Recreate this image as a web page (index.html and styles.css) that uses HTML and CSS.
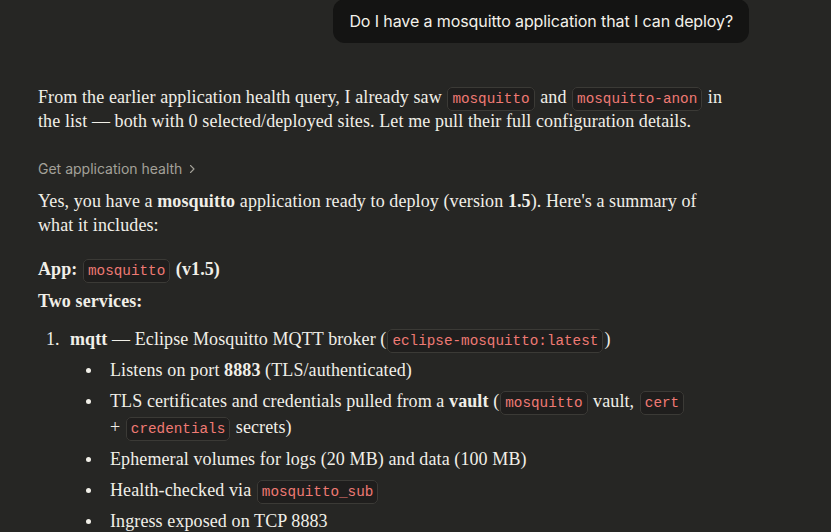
FILE: index.html
```html
<!DOCTYPE html>
<html>
<head>
<meta charset="utf-8">
<link rel="stylesheet" href="styles.css">
</head>
<body>
<div class="thread">
  <div class="user-row">
    <div class="bubble">Do I have a mosquitto application that I can deploy?</div>
  </div>
  <div class="reply">
    <p>From the earlier application health query, I already saw <code>mosquitto</code> and <code>mosquitto-anon</code> in the list — both with 0 selected/deployed sites. Let me pull their full configuration details.</p>
    <div class="tool">Get application health <svg class="chev" width="8" height="10" viewBox="0 0 8 10"><path d="M2.5 1.5 L6 5 L2.5 8.5" fill="none" stroke="currentColor" stroke-width="1.1" stroke-linecap="round" stroke-linejoin="round"/></svg></div>
    <p>Yes, you have a <b>mosquitto</b> application ready to deploy (version <b>1.5</b>). Here's a summary of what it includes:</p>
    <p class="strong-line"><b>App:</b> <code>mosquitto</code> <b>(v1.5)</b></p>
    <p class="strong-line"><b>Two services:</b></p>
    <ol>
      <li><b>mqtt</b> — Eclipse Mosquitto MQTT broker (<code>eclipse-mosquitto:latest</code>)
        <ul>
          <li>Listens on port <b>8883</b> (TLS/authenticated)</li>
          <li class="two-line">TLS certificates and credentials pulled from a <b>vault</b> (<code>mosquitto</code> vault, <code>cert</code> +&nbsp;<code>credentials</code> secrets)</li>
          <li>Ephemeral volumes for logs (20 MB) and data (100 MB)</li>
          <li>Health-checked via <code>mosquitto_sub</code></li>
          <li>Ingress exposed on TCP 8883</li>
        </ul>
      </li>
    </ol>
  </div>
</div>
</body>
</html>
```
FILE: styles.css
```css
html, body {
  margin: 0;
  padding: 0;
  background: #262624;
  height: 100%;
  overflow: hidden;
}
.thread {
  width: 720px;
  padding-left: 38px;
  color: #f1efe8;
  font-family: "Liberation Serif", serif;
  font-size: 18px;
  letter-spacing: 0.1px;
  line-height: 24px;
}
.user-row {
  display: flex;
  justify-content: flex-end;
  margin-right: 9px;
}
.bubble {
  margin-top: -1px;
  background: #141413;
  border-radius: 12px;
  padding: 10px 16px;
  font-family: Inter, "Noto Sans", sans-serif;
  font-size: 16px;
  letter-spacing: -0.1px;
  line-height: 24px;
  color: #f3f1ea;
}
.reply {
  margin-top: 42px;
  width: 685px;
}
p {
  margin: 0;
}
b {
  font-weight: 700;
}
code {
  font-family: "Liberation Mono", monospace;
  font-size: 14.3px;
  line-height: 14px;
  letter-spacing: 0;
  color: #ef7a74;
  background: #1f1e1d;
  border: 1px solid #3b3a36;
  border-radius: 5px;
  padding: 3px 4px;
  margin: 0 1px;
}
.tool {
  margin-top: 25px;
  margin-bottom: 9px;
  font-family: Inter, "Noto Sans", sans-serif;
  font-size: 14px;
  letter-spacing: 0;
  line-height: 22px;
  color: #a3a199;
  display: flex;
  align-items: center;
}
.chev {
  margin-left: 6px;
}
.strong-line {
  margin-top: 20px;
}
.strong-line + .strong-line {
  margin-top: 8px;
}
ol {
  margin: 14px 0 0 0;
  padding-left: 32px;
  list-style: none;
}
ol > li {
  position: relative;
}
ol > li::before {
  content: "1.";
  position: absolute;
  left: -24px;
  top: 0;
}
ul {
  margin: 7px 0 0 0;
  padding-left: 40px;
  list-style: none;
}
ul > li {
  position: relative;
  margin-bottom: 7px;
}
ul > li.two-line {
  line-height: 26px;
  margin-top: -1px;
}
ul > li::before {
  content: "";
  position: absolute;
  left: -24px;
  top: 10px;
  width: 5px;
  height: 5px;
  border-radius: 50%;
  background: #f1efe8;
}
ul > li.two-line::before {
  top: 11px;
}
```
